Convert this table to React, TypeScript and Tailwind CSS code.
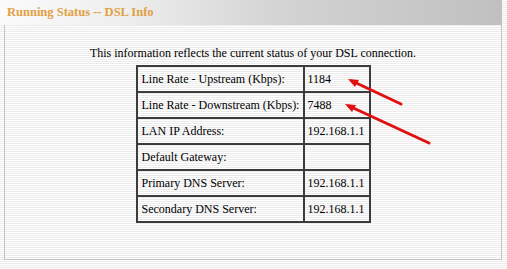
import React from "react";

const rows: [string, string][] = [
  ["Line Rate - Upstream (Kbps):", "1184"],
  ["Line Rate - Downstream (Kbps):", "7488"],
  ["LAN IP Address:", "192.168.1.1"],
  ["Default Gateway:", ""],
  ["Primary DNS Server:", "192.168.1.1"],
  ["Secondary DNS Server:", "192.168.1.1"],
];

export default function App() {
  return (
    <div className="relative w-[507px] h-[269px] overflow-hidden bg-[repeating-linear-gradient(to_bottom,#ffffff_0px,#ffffff_1px,#ebebeb_1px,#ebebeb_2px)] text-black font-['Liberation_Serif','Times_New_Roman',serif]">
      <div className="w-[502px] h-[25px] bg-[linear-gradient(to_right,#fbfbfb_0%,#eeeeee_25%,#d4d4d4_55%,#c0c0c0_100%)] flex items-center pl-[7px]">
        <span className="text-[12.5px] font-bold text-[#e0a043] leading-none">Running Status -- DSL Info</span>
      </div>
      <div className="ml-[4px] w-[498px] h-[235px] border-l border-r border-b border-[#c4c4c4] flex flex-col items-center">
        <p className="mt-[21px] text-[12px] leading-[15px] whitespace-nowrap">
          This information reflects the current status of your DSL connection.
        </p>
        <table className="mt-[4px] border border-[#3c3c3c] border-separate border-spacing-0 text-[12px] table-fixed w-[233px]">
          <tbody>
            {rows.map(([k, v]) => (
              <tr key={k}>
                <td className="w-[167px] h-[26px] border border-[#3c3c3c] pl-[4px] align-middle whitespace-nowrap">{k}</td>
                <td className="w-[66px] h-[26px] border border-[#3c3c3c] pl-[3px] align-middle whitespace-nowrap">{v}</td>
              </tr>
            ))}
          </tbody>
        </table>
      </div>
      <svg className="absolute left-0 top-0" width="507" height="269" viewBox="0 0 507 269">
        <line x1="401" y1="104" x2="352" y2="81" stroke="#e01010" strokeWidth="3" strokeLinecap="round" />
        <path d="M348,79 L359,80 L355,87 Z" fill="#e01010" />
        <line x1="429" y1="143" x2="349" y2="106" stroke="#e01010" strokeWidth="3" strokeLinecap="round" />
        <path d="M345,104 L356,105 L352,112 Z" fill="#e01010" />
      </svg>
    </div>
  );
}
